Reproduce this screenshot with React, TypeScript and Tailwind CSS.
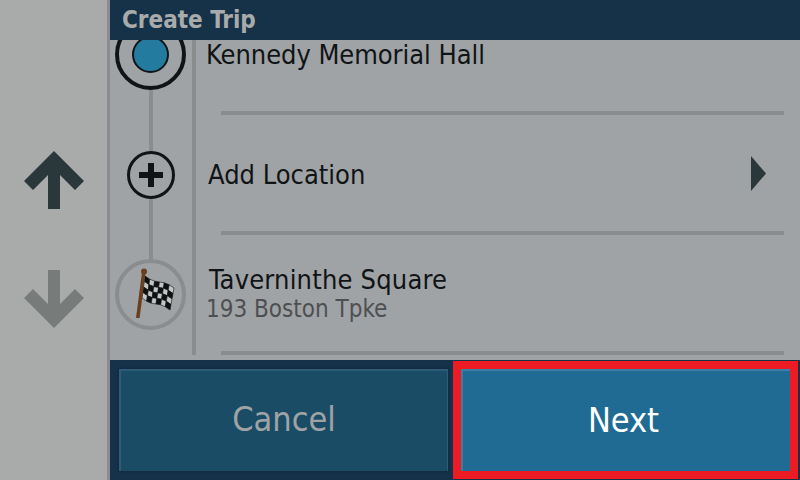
function UpArrow({ color }: { color: string }) {
  return (
    <svg width="60" height="58" viewBox="0 0 60 58" fill={color}>
      <path d="M24 58V24L9 39L0 30L30 0L60 30L51 39L36 24V58Z" />
    </svg>
  )
}

function DownArrow({ color }: { color: string }) {
  return (
    <svg width="60" height="58" viewBox="0 0 60 58" fill={color}>
      <path d="M24 0V34L9 19L0 28L30 58L60 28L51 19L36 34V0Z" />
    </svg>
  )
}

// corners of the cloth, bent by a small wave
function clothPoint(u: number, v: number) {
  const top = { x: 145 + 29 * u, y: 276 + 12 * u }
  const bottom = { x: 142 + 28 * u, y: 298 + 12 * u }
  const wave = Math.sin(u * Math.PI * 2) * 1.4
  return {
    x: top.x + (bottom.x - top.x) * v,
    y: top.y + (bottom.y - top.y) * v + wave,
  }
}

function cell(c: number, r: number, cols: number, rows: number) {
  const pts = [
    clothPoint(c / cols, r / rows),
    clothPoint((c + 1) / cols, r / rows),
    clothPoint((c + 1) / cols, (r + 1) / rows),
    clothPoint(c / cols, (r + 1) / rows),
  ]
  return pts.map((p) => `${p.x.toFixed(1)},${p.y.toFixed(1)}`).join(' ')
}

function Flag() {
  const cols = 6
  const rows = 4
  const squares: { c: number; r: number }[] = []
  for (let c = 0; c < cols; c++) {
    for (let r = 0; r < rows; r++) {
      squares.push({ c, r })
    }
  }
  return (
    <svg width="50" height="56" viewBox="126 267 50 56">
      {squares.map(({ c, r }) => (
        <polygon
          key={`${c}-${r}`}
          points={cell(c, r, cols, rows)}
          fill={(c + r) % 2 === 0 ? '#0d1113' : '#c4c6c6'}
          stroke="#0d1113"
          strokeWidth="0.6"
        />
      ))}
      <path d="M142 272L145.6 272L139.6 318L136 318Z" fill="#6a3f1f" />
      <circle cx="144" cy="271.5" r="3" fill="#6a3f1f" />
    </svg>
  )
}

function Separator() {
  return <div className="ml-[25px] w-[563px] h-1 shrink-0 bg-[#8a8c8d]" />
}

export default function App() {
  return (
    <div className="w-[800px] h-[480px] flex overflow-hidden font-['DejaVu_Sans',sans-serif] font-stretch-condensed">
      {/* Scroll arrows */}
      <div className="w-[107px] shrink-0 bg-[#a9abaa] flex flex-col items-center pt-[151px]">
        <UpArrow color="#2b383b" />
        <div className="h-[61px]" />
        <DownArrow color="#777c7a" />
      </div>
      <div className="w-[3px] shrink-0 bg-[#8a8c8d]" />

      <div className="flex-1 flex flex-col">
        <div className="h-10 shrink-0 bg-[#153249] flex items-center pl-3 text-[24px] font-bold text-[#a9abaa]">
          Create Trip
        </div>

        {/* Route list, scrolled so the first row is cut off */}
        <div className="h-[320px] shrink-0 bg-[#a0a3a5] overflow-hidden flex">
          <div className="w-[81px] mr-px shrink-0 flex flex-col items-center -mt-[21px]">
            <div className="w-[71px] h-[71px] shrink-0 rounded-full border-[4px] border-[#101416] flex items-center justify-center">
              <div className="w-[37px] h-[37px] rounded-full bg-[#247ba0] border-2 border-[#101416]" />
            </div>
            <div className="w-1 h-[61px] shrink-0 bg-[#8a8c8d]" />
            <div className="w-12 h-12 shrink-0 rounded-full border-[3px] border-[#101416] flex items-center justify-center">
              <svg width="24" height="24" viewBox="0 0 24 24" fill="#101416">
                <path d="M9 0H15V9H24V15H15V24H9V15H0V9H9Z" />
              </svg>
            </div>
            <div className="w-1 h-[60px] shrink-0 bg-[#8a8c8d]" />
            <div className="w-[71px] h-[71px] shrink-0 rounded-full border-[4px] border-[#8a8c8d] flex items-center justify-center">
              <Flag />
            </div>
          </div>
          <div className="w-1 h-[315px] shrink-0 bg-[#8a8c8d]" />

          <div className="flex-1 flex flex-col -mt-[45px]">
            <div className="h-[116px] shrink-0 flex items-center pl-[10px] pt-1 text-[27px] tracking-[-0.05px] text-[#101416]">
              Kennedy Memorial Hall
            </div>
            <Separator />
            <div className="h-[116px] shrink-0 flex items-center justify-between pl-3 pr-[34px] text-[27px] text-[#101416]">
              <span className="pt-1">Add Location</span>
              <svg width="15" height="35" viewBox="0 0 15 35" fill="#2b383b">
                <path d="M0 0L15 17.5L0 35Z" />
              </svg>
            </div>
            <Separator />
            <div className="h-[116px] shrink-0 flex flex-col justify-center gap-1 pl-[13px]">
              <span className="text-[27px] leading-7 tracking-[0.2px] text-[#101416]">Taverninthe Square</span>
              <span className="text-[24px] leading-6 -ml-[3px] -mt-px text-[#4d5052]">193 Boston Tpke</span>
            </div>
            <Separator />
          </div>
        </div>

        <div className="flex-1 bg-[#15324a] flex items-center gap-[5px] pl-[9px]">
          <button className="w-[329px] h-[102px] pb-[3px] bg-[#1a4c66] border-t-2 border-l-2 border-r border-[#2e5c78] shadow-[0_0_3px_#0f2436] text-[34px] text-[#a0a3a5] font-['DejaVu_Sans',sans-serif] font-stretch-condensed">
            Cancel
          </button>
          <div className="border-[8px] border-[#ed1c24]">
            <button className="block w-[329px] h-[102px] pr-[6px] pb-[2px] bg-[#206b94] border-t-2 border-l-2 border-[#3a80a6] text-[34px] text-white font-['DejaVu_Sans',sans-serif] font-stretch-condensed">
              Next
            </button>
          </div>
        </div>
      </div>
    </div>
  )
}
